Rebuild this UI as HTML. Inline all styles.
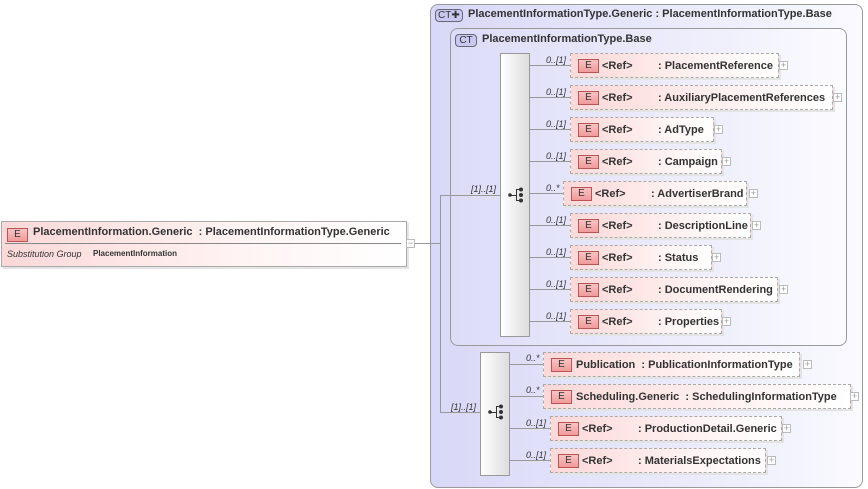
<!DOCTYPE html>
<html><head><meta charset="utf-8"><style>
*{margin:0;padding:0;box-sizing:border-box}
body{width:868px;height:489px;background:#fff;position:relative;overflow:hidden;font-family:"Liberation Sans",sans-serif;color:#333}
.a{position:absolute}
.el{position:absolute;height:25px;border:1px dashed #aaa;background:linear-gradient(to right,#fcd8d8,#fff5f5 70%,#fff);font-size:11px;font-weight:bold;line-height:24px;white-space:nowrap;box-shadow:2px 2px 0 #e4e4e4}
.E{position:absolute;left:7px;top:5px;width:21px;height:14px;border:1px solid #b55;background:linear-gradient(#f8c4c4,#f09a9a);font-size:10px;font-weight:normal;line-height:12px;text-align:center;color:#333}
.t{position:absolute;top:0}
.pl{position:absolute;width:9px;height:9px;border:1px solid #bbb;background:#fff;font-size:9px;line-height:7px;text-align:center;color:#999}
.h{position:absolute;height:1px;background:#999}
.v{position:absolute;width:1px;background:#999}
.c{position:absolute;font-size:9px;font-style:italic;color:#333}
.seq{position:absolute;width:30px;border:1px solid #999;background:linear-gradient(to right,#fff,#ddd)}
</style></head><body>

<div class="a" style="left:430px;top:4px;width:433px;height:484px;border:1px solid #999;border-radius:8px;background:linear-gradient(to right,#d8d8f8,#eeeefc 70%,#fafaff)"></div>
<div class="a" style="left:435px;top:9px;width:28px;height:13px;border:1px solid #667;border-radius:4px;background:#c8c8f0;font-size:10px;line-height:11px;padding-left:2px">CT✚</div>
<div class="a" style="left:468px;top:8px;font-size:11px;font-weight:bold">PlacementInformationType.Generic : PlacementInformationType.Base</div>

<div class="a" style="left:450px;top:28px;width:397px;height:318px;border:1px solid #999;border-radius:8px;background:linear-gradient(to right,#dcdcf8,#f0f0fc 70%,#fcfcff)"></div>
<div class="a" style="left:455px;top:34px;width:22px;height:13px;border:1px solid #667;border-radius:4px;background:#c8c8f0;font-size:10px;line-height:11px;text-align:center">CT</div>
<div class="a" style="left:482px;top:33px;font-size:11px;font-weight:bold">PlacementInformationType.Base</div>

<div class="a" style="left:1px;top:221px;width:406px;height:46px;border:1px solid #aaa;background:linear-gradient(to right,#fcd8d8,#fff4f4 60%,#fff);box-shadow:2px 2px 0 #e4e4e4"></div>
<div class="E" style="left:7px;top:228px">E</div>
<div class="a" style="left:33px;top:226px;font-size:11px;font-weight:bold">PlacementInformation.Generic&nbsp;&nbsp;: PlacementInformationType.Generic</div>
<div class="a" style="left:5px;top:243px;width:396px;height:1px;background:#888"></div>
<div class="a" style="left:7px;top:249px;font-size:9px;font-style:italic">Substitution Group</div>
<div class="a" style="left:93px;top:249px;font-size:8px;font-weight:bold">PlacementInformation</div>
<div class="pl" style="left:406px;top:239px">−</div>
<div class="h" style="left:415px;top:243px;width:25px"></div>

<div class="v" style="left:440px;top:195px;height:218px"></div>
<div class="h" style="left:440px;top:195px;width:60px"></div>
<div class="h" style="left:440px;top:412px;width:40px"></div>
<div class="c" style="left:471px;top:184px">[1]..[1]</div>
<div class="c" style="left:451px;top:402px">[1]..[1]</div>

<div class="seq" style="left:500px;top:53px;height:284px"></div>
<svg class="a" style="left:506px;top:186px" width="20" height="18"><g fill="#333" stroke="#333" stroke-width="1"><circle cx="4" cy="9" r="1.8" stroke="none"/><line x1="4" y1="9.5" x2="10" y2="9.5"/><line x1="10.5" y1="3" x2="10.5" y2="15"/><line x1="10" y1="3.5" x2="14" y2="3.5"/><line x1="10" y1="14.5" x2="14" y2="14.5"/><circle cx="15" cy="3.5" r="2" stroke="none"/><circle cx="15" cy="9" r="2" stroke="none"/><circle cx="15" cy="14.5" r="2" stroke="none"/></g></svg>

<div class="seq" style="left:480px;top:352px;height:124px"></div>
<svg class="a" style="left:486px;top:403px" width="20" height="18"><g fill="#333" stroke="#333" stroke-width="1"><circle cx="4" cy="9" r="1.8" stroke="none"/><line x1="4" y1="9.5" x2="10" y2="9.5"/><line x1="10.5" y1="3" x2="10.5" y2="15"/><line x1="10" y1="3.5" x2="14" y2="3.5"/><line x1="10" y1="14.5" x2="14" y2="14.5"/><circle cx="15" cy="3.5" r="2" stroke="none"/><circle cx="15" cy="9" r="2" stroke="none"/><circle cx="15" cy="14.5" r="2" stroke="none"/></g></svg>

<div class="h" style="left:530px;top:65px;width:40px"></div><div class="c" style="left:546px;top:55px">0..[1]</div>
<div class="el" style="left:570px;top:53px;width:209px"><div class="E">E</div><span class="t" style="left:31px">&lt;Ref&gt;</span><span class="t" style="left:87px">: PlacementReference</span></div>
<div class="pl" style="left:779px;top:61px">+</div>

<div class="h" style="left:530px;top:97px;width:40px"></div><div class="c" style="left:546px;top:87px">0..[1]</div>
<div class="el" style="left:570px;top:85px;width:263px"><div class="E">E</div><span class="t" style="left:31px">&lt;Ref&gt;</span><span class="t" style="left:87px">: AuxiliaryPlacementReferences</span></div>
<div class="pl" style="left:833px;top:93px">+</div>

<div class="h" style="left:530px;top:129px;width:40px"></div><div class="c" style="left:546px;top:119px">0..[1]</div>
<div class="el" style="left:570px;top:117px;width:144px"><div class="E">E</div><span class="t" style="left:31px">&lt;Ref&gt;</span><span class="t" style="left:87px">: AdType</span></div>
<div class="pl" style="left:714px;top:125px">+</div>

<div class="h" style="left:530px;top:161px;width:40px"></div><div class="c" style="left:546px;top:151px">0..[1]</div>
<div class="el" style="left:570px;top:149px;width:152px"><div class="E">E</div><span class="t" style="left:31px">&lt;Ref&gt;</span><span class="t" style="left:87px">: Campaign</span></div>
<div class="pl" style="left:722px;top:157px">+</div>

<div class="h" style="left:530px;top:193px;width:33px"></div><div class="c" style="left:546px;top:183px">0..*</div>
<div class="el" style="left:563px;top:181px;width:184px"><div class="E">E</div><span class="t" style="left:31px">&lt;Ref&gt;</span><span class="t" style="left:87px">: AdvertiserBrand</span></div>
<div class="pl" style="left:749px;top:189px">+</div>

<div class="h" style="left:530px;top:225px;width:40px"></div><div class="c" style="left:546px;top:215px">0..[1]</div>
<div class="el" style="left:570px;top:213px;width:181px"><div class="E">E</div><span class="t" style="left:31px">&lt;Ref&gt;</span><span class="t" style="left:87px">: DescriptionLine</span></div>
<div class="pl" style="left:752px;top:221px">+</div>

<div class="h" style="left:530px;top:257px;width:40px"></div><div class="c" style="left:546px;top:247px">0..[1]</div>
<div class="el" style="left:570px;top:245px;width:142px"><div class="E">E</div><span class="t" style="left:31px">&lt;Ref&gt;</span><span class="t" style="left:87px">: Status</span></div>
<div class="pl" style="left:712px;top:253px">+</div>

<div class="h" style="left:530px;top:289px;width:40px"></div><div class="c" style="left:546px;top:279px">0..[1]</div>
<div class="el" style="left:570px;top:277px;width:208px"><div class="E">E</div><span class="t" style="left:31px">&lt;Ref&gt;</span><span class="t" style="left:87px">: DocumentRendering</span></div>
<div class="pl" style="left:779px;top:285px">+</div>

<div class="h" style="left:530px;top:321px;width:40px"></div><div class="c" style="left:546px;top:311px">0..[1]</div>
<div class="el" style="left:570px;top:309px;width:152px"><div class="E">E</div><span class="t" style="left:31px">&lt;Ref&gt;</span><span class="t" style="left:87px">: Properties</span></div>
<div class="pl" style="left:722px;top:317px">+</div>

<div class="h" style="left:510px;top:364px;width:33px"></div><div class="c" style="left:526px;top:353px">0..*</div>
<div class="el" style="left:543px;top:352px;width:257px"><div class="E">E</div><span class="t" style="left:32px">Publication&nbsp;&nbsp;: PublicationInformationType</span></div>
<div class="pl" style="left:803px;top:360px">+</div>

<div class="h" style="left:510px;top:396px;width:33px"></div><div class="c" style="left:526px;top:385px">0..*</div>
<div class="el" style="left:543px;top:384px;width:308px"><div class="E">E</div><span class="t" style="left:32px">Scheduling.Generic&nbsp;&nbsp;: SchedulingInformationType</span></div>
<div class="pl" style="left:850px;top:392px">+</div>

<div class="h" style="left:510px;top:428px;width:40px"></div><div class="c" style="left:526px;top:418px">0..[1]</div>
<div class="el" style="left:550px;top:416px;width:232px"><div class="E">E</div><span class="t" style="left:31px">&lt;Ref&gt;</span><span class="t" style="left:87px">: ProductionDetail.Generic</span></div>
<div class="pl" style="left:782px;top:424px">+</div>

<div class="h" style="left:510px;top:460px;width:40px"></div><div class="c" style="left:526px;top:450px">0..[1]</div>
<div class="el" style="left:550px;top:448px;width:216px"><div class="E">E</div><span class="t" style="left:31px">&lt;Ref&gt;</span><span class="t" style="left:87px">: MaterialsExpectations</span></div>
<div class="pl" style="left:767px;top:456px">+</div>

</body></html>
